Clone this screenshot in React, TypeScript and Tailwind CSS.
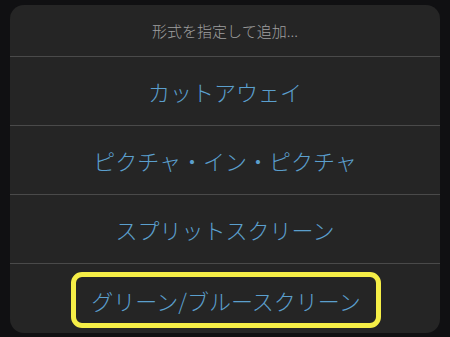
const OPTIONS = [
  "カットアウェイ",
  "ピクチャ・イン・ピクチャ",
  "スプリットスクリーン",
];

export default function App() {
  return (
    <div
      className="w-[450px] h-[337px] bg-[#101012] px-[10px] pt-[5px] pb-[4px]"
      style={{ fontFamily: '"Noto Sans CJK JP", "Noto Sans", sans-serif' }}
    >
      <div className="h-full rounded-[14px] bg-[#252525] overflow-hidden flex flex-col">
        {/* ヘッダー */}
        <div className="h-[52px] flex items-center justify-center border-b border-[#4a4a4a] text-[15px] font-light text-[#a0a0a0] pt-[2px]">
          形式を指定して追加...
        </div>

        {OPTIONS.map((label) => (
          <div
            key={label}
            className="h-[69px] flex items-center justify-center border-b border-[#4a4a4a] text-[22px] font-light text-[#5b9fcd]"
          >
            {label}
          </div>
        ))}

        {/* 選択中の項目 */}
        <div className="flex-1 flex items-start justify-center pt-[8px] pl-[2px]">
          <div className="w-[310px] h-[56px] rounded-[11px] border-[5px] border-[#f5ee47] flex items-center justify-center text-[22px] font-light text-[#5b9fcd]">
            グリーン/ブルースクリーン
          </div>
        </div>
      </div>
    </div>
  );
}
